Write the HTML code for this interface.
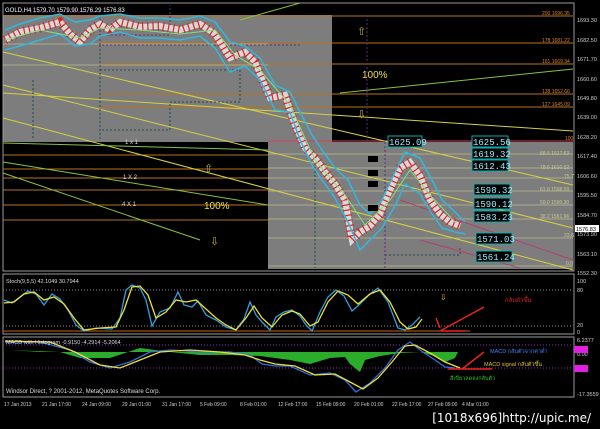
<!DOCTYPE html>
<html><head><meta charset="utf-8"><style>
html,body{margin:0;padding:0;background:#000;width:600px;height:429px;overflow:hidden}
svg{display:block;font-family:"Liberation Sans",sans-serif}
</style></head><body>
<svg width="600" height="429" viewBox="0 0 600 429">
<rect width="600" height="429" fill="#000"/>
<rect x="3" y="15" width="329" height="127" fill="#7d7d7d"/>
<rect x="268" y="142" width="305" height="127" fill="#7d7d7d"/>
<rect x="3" y="3" width="571" height="268" fill="none" stroke="#9a9a9a" stroke-width="1"/>
<g stroke="#b8741e" stroke-width="1">
<line x1="3" y1="16" x2="573" y2="16"/>
<line x1="100" y1="43" x2="573" y2="43"/>
<line x1="100" y1="64" x2="573" y2="64"/>
<line x1="100" y1="94" x2="573" y2="94"/>
<line x1="100" y1="107" x2="573" y2="107"/>
<line x1="3" y1="155" x2="268" y2="155"/>
<line x1="3" y1="169" x2="268" y2="169"/>
<line x1="3" y1="178" x2="268" y2="178"/>
<line x1="3" y1="190" x2="268" y2="190"/>
<line x1="3" y1="205" x2="268" y2="205"/>
<line x1="3" y1="220" x2="268" y2="220"/>
</g>
<line x1="268" y1="141" x2="573" y2="141" stroke="#d04060"/>
<g stroke="#c8c890" stroke-width="0.8" opacity="0.8">
<line x1="3" y1="44" x2="268" y2="44"/><line x1="3" y1="65" x2="268" y2="65"/>
<line x1="268" y1="154" x2="573" y2="154"/><line x1="268" y1="168" x2="573" y2="168"/>
<line x1="268" y1="178" x2="573" y2="178"/><line x1="268" y1="191" x2="573" y2="191"/>
<line x1="268" y1="205" x2="573" y2="205"/><line x1="268" y1="219" x2="573" y2="219"/>
<line x1="268" y1="238" x2="573" y2="238"/><line x1="268" y1="266" x2="573" y2="266"/>
</g>
<g stroke="#d8d040" stroke-width="1" fill="none">
<line x1="3" y1="52" x2="573" y2="185"/>
<line x1="3" y1="85" x2="573" y2="228"/>
<line x1="3" y1="118" x2="573" y2="270"/>
<line x1="3" y1="93" x2="573" y2="131"/>
</g>
<g stroke="#8ac040" stroke-width="1" fill="none">
<line x1="240" y1="20" x2="300" y2="3"/>
<line x1="340" y1="93" x2="573" y2="69"/>
<line x1="3" y1="143" x2="268" y2="150"/>
<line x1="3" y1="162" x2="268" y2="205"/>
<line x1="3" y1="173" x2="200" y2="240"/>
</g>
<g stroke="#c03070" stroke-width="1" fill="none" opacity="0.8">
<line x1="400" y1="200" x2="573" y2="260"/><line x1="420" y1="240" x2="520" y2="268"/>
</g>
<g stroke="#5a2a7a" stroke-width="1" stroke-dasharray="2,2" fill="none">
<polyline points="30,12 100,12 100,35 170,35 170,5"/>
<polyline points="100,35 100,45 300,45"/>
<line x1="367" y1="15" x2="367" y2="142"/>
<line x1="385" y1="142" x2="385" y2="268"/>
</g>
<g stroke="#1a4a4a" stroke-width="1" stroke-dasharray="2,2" fill="none">
<polyline points="33,80 33,140"/><polyline points="100,45 100,140"/>
<polyline points="100,70 240,70 240,102 170,102 170,130 100,130"/>
<polyline points="315,155 315,268"/>
<polyline points="385,255 460,255 460,248"/>
</g>
<polyline fill="none" stroke="#d8d8d8" stroke-width="6" points="5,40 20,32 40,28 60,22 70,34 80,42 90,30 100,24 110,30 120,22 140,27 160,26 180,30 200,24 215,34 230,58 245,52 255,62 270,98 285,95 295,125 305,148 315,158 325,172 335,184 345,200 352,240 360,232 370,226 380,214 390,190 400,168 410,162 420,176 430,200 440,214 450,222 460,226"/>
<polyline fill="none" stroke="#e02020" stroke-width="9" stroke-dasharray="1.2,4" points="5,40 20,32 40,28 60,22 70,34 80,42 90,30 100,24 110,30 120,22 140,27 160,26 180,30 200,24 215,34 230,58 245,52 255,62 270,98 285,95 295,125 305,148 315,158 325,172 335,184 345,200 352,240 360,232 370,226 380,214 390,190 400,168 410,162 420,176 430,200 440,214 450,222 460,226"/>
<polyline fill="none" stroke="#30b8e0" stroke-width="1.5" points="5,30 20,24 40,18 60,14 75,22 90,20 100,16 120,14 140,18 160,18 180,20 200,16 215,22 230,42 245,46 260,58 275,85 290,92 300,112 312,135 322,150 335,168 348,180 360,205 370,214 382,200 395,172 405,152 420,158 432,180 442,200 455,212 465,222"/>
<polyline fill="none" stroke="#30b8e0" stroke-width="1.5" points="5,50 20,46 40,40 60,34 75,46 90,44 100,36 120,32 140,38 160,38 180,40 200,36 215,48 230,72 245,66 260,80 275,110 290,112 300,140 312,165 322,180 335,198 348,222 360,250 370,240 382,228 395,206 405,184 420,194 432,214 442,228 455,232 465,234"/>
<polyline fill="none" stroke="#80e080" stroke-width="1" points="5,40 40,30 80,38 100,28 140,30 180,34 215,30 235,55 260,70 290,105 315,160 345,195 365,225 390,200 410,170 430,195 455,222"/>
<text x="5" y="12" fill="#fff" font-size="6">GOLD,H4  1579.70 1579.90 1576.29 1576.83</text>
<text x="362" y="78" fill="#f0e040" font-size="10">100%</text>
<text x="204" y="209" fill="#f0e040" font-size="10">100%</text>
<text x="357" y="35" fill="#c0b030" font-size="11">⇧</text>
<text x="357" y="118" fill="#c0b030" font-size="11">⇩</text>
<text x="204" y="172" fill="#c0b030" font-size="11">⇧</text>
<text x="210" y="245" fill="#c0b030" font-size="11">⇩</text>
<g fill="#ddd" font-size="6"><text x="125" y="144">1 x 1</text><text x="123" y="179">1 X 2</text><text x="122" y="206">4 X 1</text></g>
<g fill="#e08020" font-size="5">
<text x="542" y="15">200  1696.35</text><text x="542" y="42">178  1681.22</text><text x="542" y="63">161  1669.34</text><text x="542" y="93">138  1652.66</text><text x="542" y="106">127  1645.09</text><text x="565" y="140">100</text>
</g>
<g fill="#c8c890" font-size="5">
<text x="540" y="155">88.6 1617.63</text><text x="540" y="169">78.6 1610.52</text><text x="564" y="178">75.7</text><text x="540" y="191">61.8 1598.59</text><text x="540" y="204">50.0 1590.30</text><text x="540" y="218">38.2 1581.96</text><text x="564" y="237">23.6</text><text x="566" y="265">0.0</text>
</g>
<g font-family="Liberation Mono,monospace" font-size="9" fill="#9ef">
<rect x="388" y="136" width="34" height="11" fill="#000" stroke="#1aa"/><text x="389" y="145">1625.09</text>
<rect x="472" y="136" width="36" height="11" fill="#000" stroke="#1aa"/><text x="473" y="145">1625.56</text>
<rect x="472" y="148" width="36" height="11" fill="#000" stroke="#1aa"/><text x="473" y="157">1619.32</text>
<rect x="472" y="160" width="36" height="11" fill="#000" stroke="#1aa"/><text x="473" y="169">1612.43</text>
<rect x="474" y="184" width="36" height="11" fill="#000" stroke="#1aa"/><text x="475" y="193">1598.32</text>
<rect x="474" y="198" width="36" height="11" fill="#000" stroke="#1aa"/><text x="475" y="207">1590.12</text>
<rect x="474" y="211" width="36" height="11" fill="#000" stroke="#1aa"/><text x="475" y="220">1583.23</text>
<rect x="476" y="233" width="36" height="11" fill="#000" stroke="#1aa"/><text x="477" y="242">1571.03</text>
<rect x="476" y="251" width="36" height="11" fill="#000" stroke="#1aa"/><text x="477" y="260">1561.24</text>
</g>
<g fill="#000"><rect x="368" y="156" width="10" height="6"/><rect x="368" y="170" width="10" height="6"/><rect x="368" y="181" width="10" height="6"/><rect x="368" y="205" width="10" height="6"/></g>
<g fill="#ccc" font-size="5.5">
<text x="577" y="22">1693.30</text><text x="577" y="42">1682.50</text><text x="577" y="61">1671.70</text><text x="577" y="81">1660.60</text><text x="577" y="100">1649.80</text><text x="577" y="119">1639.00</text><text x="577" y="139">1628.20</text><text x="577" y="158">1617.40</text><text x="577" y="178">1606.60</text><text x="577" y="197">1595.50</text><text x="577" y="217">1584.70</text><text x="577" y="236">1573.90</text><text x="577" y="256">1563.10</text><text x="577" y="275">1552.30</text>
</g>
<rect x="575" y="225" width="24" height="7" fill="#fff"/><text x="576" y="231" font-size="5.5" fill="#000">1576.83</text>
<rect x="3" y="274" width="571" height="60" fill="none" stroke="#9a9a9a"/>
<g stroke="#888" stroke-dasharray="1,2"><line x1="3" y1="290" x2="573" y2="290"/><line x1="3" y1="326" x2="573" y2="326"/></g>
<line x1="3" y1="331" x2="470" y2="331" stroke="#c86010"/>
<text x="6" y="283" fill="#ddd" font-size="5.5">Stoch(9,5,5) 42.1049 30.7944</text>
<g fill="#ccc" font-size="5.5"><text x="577" y="283">100</text><text x="577" y="292">80</text><text x="577" y="327">20</text><text x="577" y="334">0</text></g>
<polyline fill="none" stroke="#30a0e0" stroke-width="1.3" points="4,300 12,303 20,297 28,291 36,294 44,305 52,294 60,299 68,310 76,325 84,331 96,328 112,329 120,318 126,290 132,285 140,288 146,300 152,326 160,312 170,308 178,292 184,305 192,307 198,301 206,315 216,320 226,327 236,330 244,319 250,302 256,315 262,322 270,330 276,317 284,312 292,310 300,316 306,325 312,331 320,312 328,297 336,290 344,296 352,311 360,304 370,294 378,288 388,302 398,328 405,330 412,325 420,317"/>
<polyline fill="none" stroke="#f0e030" stroke-width="1.3" points="4,303 14,302 24,294 34,292 44,300 54,297 64,304 74,318 84,330 100,328 116,327 124,310 132,287 140,286 148,295 156,318 166,312 176,300 186,302 196,300 206,309 216,318 226,325 236,330 246,318 254,306 262,318 272,327 282,315 292,311 300,314 310,326 318,322 328,302 338,291 348,295 358,304 370,294 380,290 390,302 400,322 408,329 416,327 422,319"/>
<text x="440" y="300" fill="#e0c020" font-size="8">⇩</text>
<text x="505" y="302" fill="#e02020" font-size="6" font-family="Liberation Sans,'Noto Sans CJK SC',sans-serif">กลับตัวขึ้น</text>
<g stroke="#f02020" stroke-width="1.5"><line x1="440" y1="331" x2="484" y2="307"/><line x1="442" y1="331" x2="465" y2="331"/><line x1="436" y1="318" x2="440" y2="328"/></g>
<rect x="3" y="337" width="571" height="60" fill="none" stroke="#9a9a9a"/>
<g stroke="#a020c0" stroke-dasharray="1,2"><line x1="3" y1="345" x2="573" y2="345"/><line x1="3" y1="368" x2="573" y2="368"/></g>
<path d="M10,350 L60,352 L80,358 L110,358 L140,348 L170,352 L200,355 L230,355 L260,356 L290,360 L310,364 L330,358 L345,357 L350,364 L360,372 L365,360 L380,356 L400,353 L420,352 L435,356 L445,362 L455,358 L458,352 L300,352 L120,352 L40,352 Z" fill="#30c030" opacity="0.9"/>
<polyline fill="none" stroke="#3070e0" stroke-width="1.3" points="5,342 40,342 70,350 90,362 110,368 130,362 150,352 170,350 200,352 230,352 250,355 262,364 275,366 290,366 310,375 330,373 345,380 356,392 370,383 385,368 398,350 410,342 420,350 435,360 445,367 455,368"/>
<polyline fill="none" stroke="#f0e030" stroke-width="1.3" points="5,341 50,342 75,352 100,365 120,368 140,360 160,352 190,350 220,352 245,355 260,360 275,364 295,366 315,375 335,374 350,382 363,389 378,378 392,362 405,346 415,345 428,352 445,362 460,368"/>
<text x="6" y="344" fill="#ddd" font-size="5.5">MACD with Histogram -0.9150 -4.2914 -5.2064</text>
<g fill="#ccc" font-size="5.5"><text x="577" y="342">6.2377</text><text x="577" y="356">0.00</text><text x="577" y="396">-17.3559</text></g>
<rect x="574" y="346" width="14" height="7" fill="#e020e0"/><rect x="574" y="365" width="14" height="7" fill="#e020e0"/>
<g font-size="5.5" font-family="Liberation Sans,'Noto Sans CJK SC',sans-serif">
<text x="490" y="353" fill="#4080ff">MACD กลับตัวจากค่าต่ำ</text>
<text x="484" y="366" fill="#e0c020">MACD signal กลับตัวขึ้น</text>
<text x="450" y="380" fill="#30c030">สีเขียวลดลงกลับตัว</text>
</g>
<g stroke="#f02020" stroke-width="1.5"><line x1="462" y1="369" x2="484" y2="352"/><line x1="448" y1="369" x2="492" y2="369"/></g>
<text x="6" y="393" fill="#ddd" font-size="6">Windsor Direct, ? 2001-2012, MetaQuotes Software Corp.</text>
<g fill="#ccc" font-size="5"><text x="4" y="406">17 Jan 2013</text><text x="42" y="406">21 Jan 17:00</text><text x="82" y="406">24 Jan 09:00</text><text x="122" y="406">29 Jan 01:00</text><text x="162" y="406">31 Jan 17:00</text><text x="200" y="406">5 Feb 09:00</text><text x="240" y="406">8 Feb 01:00</text><text x="278" y="406">12 Feb 17:00</text><text x="316" y="406">15 Feb 09:00</text><text x="354" y="406">20 Feb 01:00</text><text x="392" y="406">22 Feb 17:00</text><text x="428" y="406">27 Feb 09:00</text><text x="462" y="406">4 Mar 01:00</text></g>
<text x="591" y="422" fill="#fff" font-size="12" text-anchor="end" font-family="DejaVu Sans,sans-serif">[1018x696]http://upic.me/</text>
</svg>
</body></html>
